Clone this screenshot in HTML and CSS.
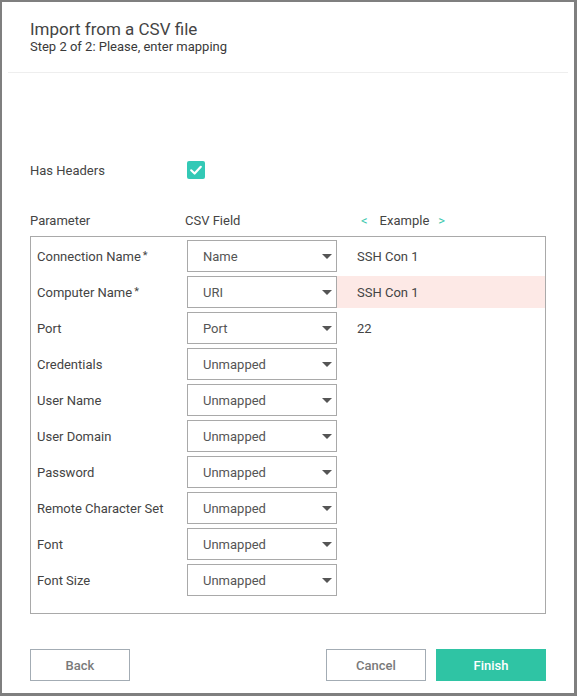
FILE: index.html
```html
<!DOCTYPE html>
<html>
<head>
<meta charset="utf-8">
<link rel="stylesheet" href="styles.css">
</head>
<body>
<div class="dialog">
  <div class="header">
    <div class="title">Import from a CSV file</div>
    <div class="subtitle">Step 2 of 2: Please, enter mapping</div>
  </div>
  <div class="separator"></div>
  <div class="content">
    <div class="has-headers">
      <span class="hh-label">Has Headers</span>
      <span class="checkbox">
        <svg width="18" height="18" viewBox="0 0 18 18"><path d="M4.2 9.3 L7.6 12.5 L13.8 5.8" fill="none" stroke="#fff" stroke-width="2.2" stroke-linecap="round" stroke-linejoin="round"/></svg>
      </span>
    </div>
    <div class="col-heads">
      <span class="ch-param">Parameter</span>
      <span class="ch-field">CSV Field</span>
      <span class="ch-example"><span class="nav">&lt;</span><span class="ex-label">Example</span><span class="nav">&gt;</span></span>
    </div>
    <div class="table">
      <div class="row"><span class="lbl">Connection Name<span class="req">*</span></span><div class="select">Name<span class="arrow"></span></div><div class="ex">SSH Con 1</div></div>
      <div class="row"><span class="lbl">Computer Name<span class="req">*</span></span><div class="select">URI<span class="arrow"></span></div><div class="ex ex-error">SSH Con 1</div></div>
      <div class="row"><span class="lbl">Port</span><div class="select">Port<span class="arrow"></span></div><div class="ex">22</div></div>
      <div class="row"><span class="lbl">Credentials</span><div class="select">Unmapped<span class="arrow"></span></div><div class="ex"></div></div>
      <div class="row"><span class="lbl">User Name</span><div class="select">Unmapped<span class="arrow"></span></div><div class="ex"></div></div>
      <div class="row"><span class="lbl">User Domain</span><div class="select">Unmapped<span class="arrow"></span></div><div class="ex"></div></div>
      <div class="row"><span class="lbl">Password</span><div class="select">Unmapped<span class="arrow"></span></div><div class="ex"></div></div>
      <div class="row"><span class="lbl">Remote Character Set</span><div class="select">Unmapped<span class="arrow"></span></div><div class="ex"></div></div>
      <div class="row"><span class="lbl">Font</span><div class="select">Unmapped<span class="arrow"></span></div><div class="ex"></div></div>
      <div class="row"><span class="lbl">Font Size</span><div class="select">Unmapped<span class="arrow"></span></div><div class="ex"></div></div>
    </div>
    <div class="footer">
      <button class="btn btn-outline">Back</button>
      <div class="spacer"></div>
      <button class="btn btn-outline">Cancel</button>
      <button class="btn btn-primary">Finish</button>
    </div>
  </div>
</div>
</body>
</html>
```
FILE: styles.css
```css
html, body {
  margin: 0;
  padding: 0;
  background: #fff;
}
body {
  font-family: Roboto, "Liberation Sans", sans-serif;
  color: #444;
}
.dialog {
  box-sizing: border-box;
  width: 577px;
  height: 696px;
  border-style: solid;
  border-color: #7f7f7f;
  border-width: 2px 3px 3px 2px;
  background: #fff;
}
.header {
  padding: 17px 0 0 28px;
}
.title {
  font-size: 17px;
  line-height: 20px;
  color: #444;
}
.subtitle {
  font-size: 13px;
  line-height: 16px;
  color: #3a3a3a;
}
.separator {
  height: 1px;
  background: #eeeeee;
  margin: 17px 6px 0 6px;
}
.content {
  padding: 0 28px 0 28px;
}
.has-headers {
  display: flex;
  align-items: center;
  height: 18px;
  margin-top: 88px;
  font-size: 13px;
}
.hh-label {
  width: 157px;
}
.checkbox {
  width: 18px;
  height: 18px;
  border-radius: 2px;
  background: #33c9b6;
  display: flex;
}
.col-heads {
  display: flex;
  align-items: center;
  height: 18px;
  margin-top: 32px;
  font-size: 13px;
  color: #444;
}
.ch-param {
  width: 155px;
}
.ch-field {
  width: 176px;
}
.ch-example {
  display: flex;
  align-items: center;
}
.nav {
  color: #3cc8ad;
  font-size: 13px;
}
.ex-label {
  margin: 0 9px 0 12px;
}
.table {
  margin-top: 7px;
  border: 1px solid #a9a9a9;
  padding: 3px 0 17px 0;
  display: flex;
  flex-direction: column;
  gap: 4px;
}
.row {
  display: grid;
  grid-template-columns: 156px 150px 1fr;
  height: 32px;
  font-size: 13px;
}
.lbl {
  padding-left: 6px;
  display: flex;
  align-items: center;
  color: #444;
  white-space: nowrap;
}
.req {
  font-size: 11px;
  margin-left: 2px;
  position: relative;
  top: -1px;
}
.select {
  box-sizing: border-box;
  border: 1px solid #a9a9a9;
  display: flex;
  align-items: center;
  padding-left: 15px;
  color: #555;
  position: relative;
}
.arrow {
  position: absolute;
  right: 4px;
  top: 13px;
  width: 0;
  height: 0;
  border-left: 5px solid transparent;
  border-right: 5px solid transparent;
  border-top: 5px solid #555;
}
.ex {
  display: flex;
  align-items: center;
  padding-left: 20px;
  color: #444;
}
.ex-error {
  background: #fde9e6;
}
.footer {
  display: flex;
  margin-top: 35px;
  gap: 10px;
}
.spacer {
  flex: 1;
}
.btn {
  box-sizing: border-box;
  height: 32px;
  font-family: Roboto, "Liberation Sans", sans-serif;
  font-size: 13px;
  font-weight: 500;
  cursor: pointer;
}
.btn-outline {
  width: 100px;
  background: #fff;
  border: 1px solid #a3acb4;
  color: #7a7a7a;
}
.btn-primary {
  width: 110px;
  background: #2fc4a4;
  border: none;
  color: #fff;
}
```
